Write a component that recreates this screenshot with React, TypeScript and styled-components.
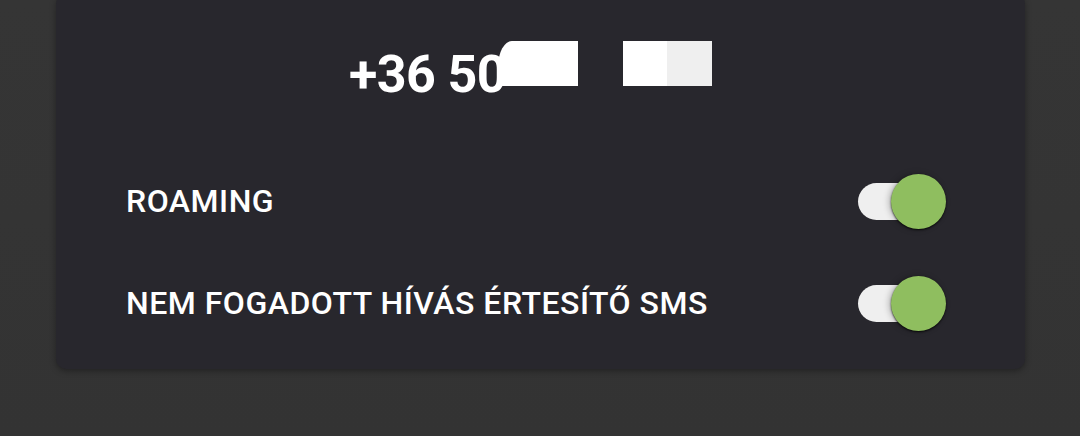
import React from "react";
import styled, { createGlobalStyle } from "styled-components";

const Global = createGlobalStyle`
  html, body { margin: 0; padding: 0; }
  body {
    background: #343434;
    font-family: Roboto, "Noto Sans", "Liberation Sans", sans-serif;
    -webkit-font-smoothing: antialiased;
  }
`;

const Page = styled.div`
  height: 436px;
  padding: 0 55px 0 56px;
  box-sizing: border-box;
  overflow: hidden;
  background: linear-gradient(180deg, #353535 0%, #333333 100%);
`;

const Card = styled.div`
  margin-top: -6px;
  padding: 6px 0 15px;
  background: #28272d;
  border-radius: 10px;
  box-shadow: 0 2px 6px rgba(0, 0, 0, 0.35);
`;

const Header = styled.div`
  height: 150px;
  display: flex;
  align-items: center;
  justify-content: center;
  padding-right: 20px;
`;

const Number = styled.span`
  color: #ffffff;
  font-size: 52px;
  font-weight: 700;
  line-height: 1;
  letter-spacing: -0.6px;
`;

const Redact = styled.span<{ $w: number; $split?: number; $curve?: boolean; $gap?: number }>`
  display: inline-block;
  width: ${(p) => p.$w}px;
  height: 45px;
  margin-left: ${(p) => p.$gap ?? 0}px;
  margin-bottom: 24px;
  background: ${(p) =>
    p.$split
      ? `linear-gradient(90deg, #ffffff 0 ${p.$split}px, #efefef ${p.$split}px 100%)`
      : "#ffffff"};
  border-top-left-radius: ${(p) => (p.$curve ? "14px 26px" : "0")};
`;

const Row = styled.div`
  height: 102px;
  display: flex;
  align-items: center;
  justify-content: space-between;
  padding: 0 79px 0 70px;
`;

const Label = styled.span`
  color: #ffffff;
  font-size: 32px;
  font-weight: 500;
  letter-spacing: 0.5px;
  line-height: 1;
`;

const Switch = styled.div`
  position: relative;
  width: 88px;
  height: 55px;
  flex: none;
`;

const Track = styled.div`
  position: absolute;
  left: 0;
  top: 9px;
  width: 62px;
  height: 37px;
  border-radius: 19px;
  background: #efefef;
`;

const Thumb = styled.div`
  position: absolute;
  right: 0;
  top: 0;
  width: 55px;
  height: 55px;
  border-radius: 50%;
  background: #8fbe5f;
  box-shadow: 0 1px 2px rgba(0, 0, 0, 0.8), -2px 0 6px rgba(0, 0, 0, 0.25);
`;

const Toggle = () => (
  <Switch>
    <Track />
    <Thumb />
  </Switch>
);

export default function App() {
  return (
    <>
      <Global />
      <Page>
        <Card>
          <Header>
            <Number>+36 50</Number>
            <Redact $w={80} $curve $gap={-8} />
            <Redact $w={89} $split={44} $gap={45} />
          </Header>
          <Row>
            <Label>ROAMING</Label>
            <Toggle />
          </Row>
          <Row>
            <Label>NEM FOGADOTT HÍVÁS ÉRTESÍTŐ SMS</Label>
            <Toggle />
          </Row>
        </Card>
      </Page>
    </>
  );
}
